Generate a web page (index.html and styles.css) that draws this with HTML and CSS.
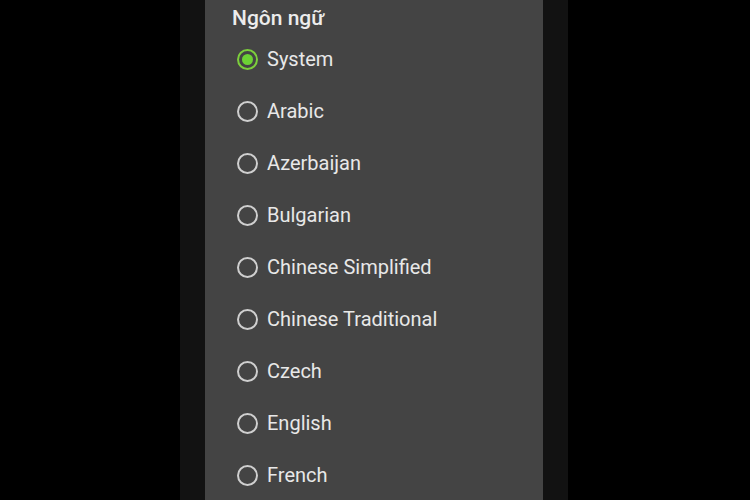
FILE: index.html
```html
<!DOCTYPE html>
<html lang="vi">
<head>
<meta charset="UTF-8">
<title>Ngôn ngữ</title>
<link rel="stylesheet" href="styles.css">
</head>
<body>

<div class="phone">
  <div class="dialog">
    <h2 class="title">Ngôn ngữ</h2>
    <ul class="options">
      <li class="option selected"><span class="radio"></span>System</li>
      <li class="option"><span class="radio"></span>Arabic</li>
      <li class="option"><span class="radio"></span>Azerbaijan</li>
      <li class="option"><span class="radio"></span>Bulgarian</li>
      <li class="option"><span class="radio"></span>Chinese Simplified</li>
      <li class="option"><span class="radio"></span>Chinese Traditional</li>
      <li class="option"><span class="radio"></span>Czech</li>
      <li class="option"><span class="radio"></span>English</li>
      <li class="option"><span class="radio"></span>French</li>
    </ul>
  </div>
</div>

</body>
</html>
```

FILE: styles.css
```css
html, body {
  margin: 0;
  height: 100%;
  overflow: hidden;
  background: #000;
}

body {
  font-family: Roboto, "Noto Sans", sans-serif;
  display: flex;
  justify-content: center;
}

.phone {
  width: 388px;
  height: 500px;
  margin-left: -2px;
  padding: 0 25px;
  box-sizing: border-box;
  background: #121212;
}

.dialog {
  height: 100%;
  background: #444444;
}

.title {
  margin: 0;
  padding: 5px 0 0 27px;
  height: 28px;
  font-size: 21px;
  font-weight: 500;
  color: #ececec;
  line-height: 26px;
}

.options {
  list-style: none;
  margin: 0;
  padding: 0;
}

.option {
  display: flex;
  align-items: center;
  height: 52px;
  padding-left: 32px;
  font-size: 20px;
  color: #e8e8e8;
}

.radio {
  width: 17px;
  height: 17px;
  border: 2px solid #cfcfcf;
  border-radius: 50%;
  margin-right: 9px;
  flex-shrink: 0;
  display: flex;
  align-items: center;
  justify-content: center;
}

.selected .radio {
  border-color: #7ccf3c;
}

.selected .radio::after {
  content: "";
  width: 11px;
  height: 11px;
  border-radius: 50%;
  background: #6cd234;
}
```
